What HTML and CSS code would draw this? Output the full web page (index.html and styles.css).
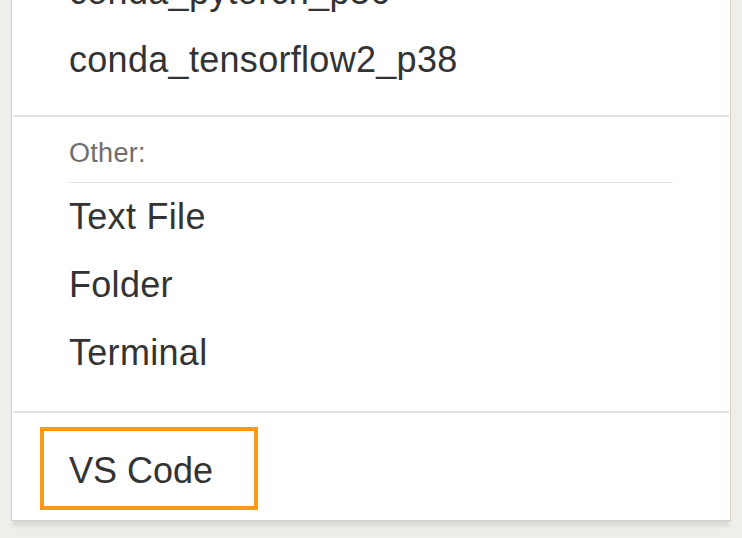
FILE: index.html
```html
<!DOCTYPE html>
<html>
<head>
<meta charset="utf-8">
<link rel="stylesheet" href="styles.css">
</head>
<body>
<div class="menu">
  <div class="section first">
    <div class="item">conda_pytorch_p36</div>
    <div class="item">conda_tensorflow2_p38</div>
  </div>
  <div class="divider"></div>
  <div class="section other">
    <div class="header">Other:</div>
    <div class="item">Text File</div>
    <div class="item">Folder</div>
    <div class="item">Terminal</div>
  </div>
  <div class="divider"></div>
  <div class="section last">
    <div class="item boxed">VS Code</div>
  </div>
</div>
</body>
</html>
```

FILE: styles.css
```css
html, body {
  margin: 0;
  padding: 0;
  background: #eeeeea;
  height: 100%;
  overflow: hidden;
}
body {
  font-family: "Liberation Sans", Arial, sans-serif;
  color: #333333;
}
.menu {
  margin: -42px 0 0 11px;
  width: 718px;
  background: #ffffff;
  border: 1px solid #d8d0c0;
  border-top: none;
  box-shadow: 0 7px 3px -2px #dadad8;
}
.section.first {
  padding-bottom: 21px;
}
.item {
  height: 68px;
  line-height: 68px;
  padding-left: 57px;
  font-size: 36px;
  letter-spacing: 0.3px;
  white-space: nowrap;
}
.divider {
  height: 2px;
  margin: 0 1px;
  background: #e4e4e2;
}
.section.other {
  padding-bottom: 24px;
}
.header {
  margin: 0 57px;
  box-sizing: border-box;
  height: 66px;
  line-height: 72px;
  font-size: 27px;
  letter-spacing: 0.3px;
  color: #6e6e6e;
  border-bottom: 1px solid #e4e4e2;
}
.other .item:first-of-type {
  margin-top: 2px;
}
.section.last {
  padding: 14px 0 10px 28px;
}
.item.boxed {
  display: inline-block;
  box-sizing: border-box;
  width: 218px;
  height: 83px;
  line-height: 80px;
  padding-left: 25px;
  letter-spacing: 0;
  border: 4px solid #f7991b;
}
```
